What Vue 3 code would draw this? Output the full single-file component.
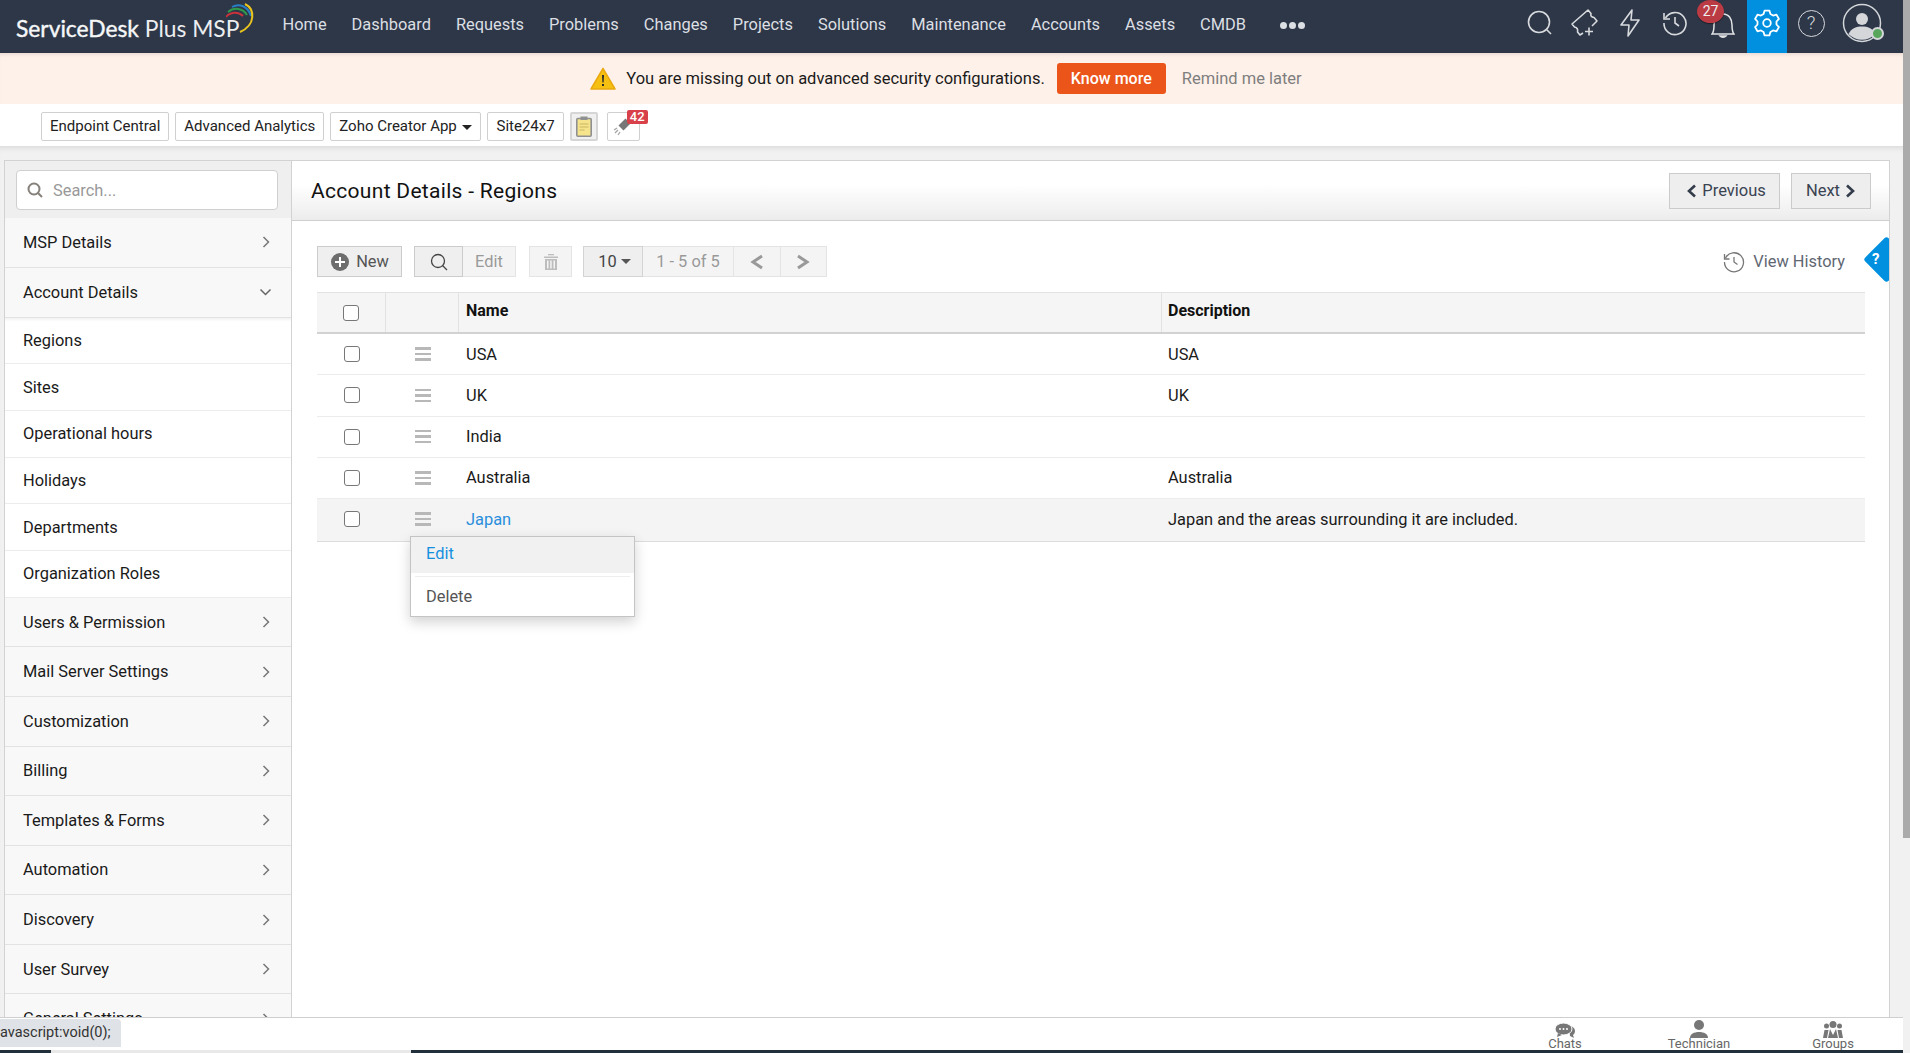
<script setup>
const nav = ['Home','Dashboard','Requests','Problems','Changes','Projects','Solutions','Maintenance','Accounts','Assets','CMDB']
const tools = ['Endpoint Central','Advanced Analytics']
const topItems = ['MSP Details']
const subItems = ['Regions','Sites','Operational hours','Holidays','Departments','Organization Roles']
const lowerItems = ['Users & Permission','Mail Server Settings','Customization','Billing','Templates & Forms','Automation','Discovery','User Survey','General Settings']
const rows = [
  { name:'USA', desc:'USA' },
  { name:'UK', desc:'UK' },
  { name:'India', desc:'' },
  { name:'Australia', desc:'Australia' },
  { name:'Japan', desc:'Japan and the areas surrounding it are included.', active:true },
]
function pt(r, deg) {
  const t = deg * Math.PI / 180
  return (14 + r * Math.cos(t)).toFixed(2) + ' ' + (14 + r * Math.sin(t)).toFixed(2)
}
const pts = []
for (let k = 0; k < 6; k++) {
  const a = k * 60 - 90
  pts.push(pt(9.6, a - 21), pt(12.6, a - 11), pt(12.6, a + 11), pt(9.6, a + 21))
}
const gearPath = 'M' + pts.join('L') + 'Z'
</script>

<template>
  <div class="page">
    <div class="col">
      <header class="header">
        <div class="logo">
          <span class="logo-text"><span class="strong">ServiceDesk</span> Plus MSP</span>
          <svg class="logo-arcs" width="30" height="32" viewBox="0 0 30 32" fill="none">
            <path d="M0 14C4 9 12 8 17 13" stroke="#c8323a" stroke-width="2"/>
            <path d="M2 9C8 4 17 5 21 12" stroke="#2f9a4b" stroke-width="2"/>
            <path d="M6 4C13 0 22 3 25 13" stroke="#2a7fc4" stroke-width="2"/>
            <path d="M19 1C29 6 30 22 14 29" stroke="#e9c31e" stroke-width="2"/>
          </svg>
        </div>
        <nav class="nav">
          <a v-for="n in nav" :key="n">{{ n }}</a>
          <span class="dots"><i></i><i></i><i></i></span>
        </nav>
        <div class="hicons">
          <span class="hi w45"><svg width="26" height="26" viewBox="0 0 26 26" fill="none" stroke="#d8dadd" stroke-width="1.6"><circle cx="12" cy="12" r="10.5"/><path d="M19.5 19.5l4.5 4.5"/></svg></span>
          <span class="hi w45"><svg width="29" height="29" viewBox="0 0 29 29" fill="none" stroke="#d8dadd" stroke-width="1.6" stroke-linejoin="round"><path d="M22 18 27 13 L24 9.500Q20 9 21 5.500L18 2 2 16 4.500 19Q8.500 20 7.500 24L10 27 13 25"/><path d="M19 19.500v8M15 23.500h8"/></svg></span>
          <span class="hi w45"><svg width="22" height="28" viewBox="0 0 22 28" fill="none" stroke="#d8dadd" stroke-width="1.6" stroke-linejoin="round"><path d="M13 1 2 16h8l-1 11 11-16h-8z"/></svg></span>
          <span class="hi w45"><svg width="26" height="26" viewBox="0 0 26 26" fill="none" stroke="#d8dadd" stroke-width="1.6"><path d="M3.500 8A11 11 0 1 1 2 13"/><path d="M2 3v6h6"/><path d="M13 7v6l4 3"/></svg></span>
          <span class="bell"><svg width="24" height="26" viewBox="0 0 24 26" fill="none" stroke="#e3e4e6" stroke-width="1.500"><path d="M1 21c2-2 2-4 2-9 0-6 3-11 9-11s9 5 9 11c0 5 0 7 2 9z"/><path d="M9 23a3.500 2.500 0 0 0 6 0z" fill="#e3e4e6"/></svg><span class="bell-badge">27</span></span>
          <span class="gear"><svg width="28" height="28" viewBox="0 0 28 28" fill="none" stroke="#fff" stroke-width="1.800" stroke-linejoin="round"><circle cx="14" cy="14" r="3.800"/><path :d="gearPath"/></svg></span>
          <span class="hi help"><span class="help-ring">?</span></span>
          <span class="avatar">
            <svg width="40" height="40" viewBox="0 0 40 40"><circle cx="20" cy="20" r="18.500" fill="none" stroke="#d4d6da" stroke-width="1.500"/><circle cx="20" cy="16" r="6" fill="#d4d6da"/><path d="M6.500 31c3-6 8-7.500 13.500-7.500S30.500 25 33.500 31A18.500 18.500 0 0 1 6.500 31z" fill="#d4d6da"/></svg>
            <i class="online"></i>
          </span>
        </div>
      </header>

      <div class="banner">
        <svg width="26" height="24" viewBox="0 0 26 24"><path d="M13 1.500 25 22H1z" fill="#f6c012" stroke="#eaa90f" stroke-width="1.500" stroke-linejoin="round"/><path d="M12 8h2l-.4 7.500h-1.200zM12 17h2v2h-2z" fill="#2b2b2b"/></svg>
        <span class="banner-text">You are missing out on advanced security configurations.</span>
        <button class="know">Know more</button>
        <span class="remind">Remind me later</span>
      </div>

      <div class="toolbar">
        <span v-for="t in tools" :key="t" class="tbtn">{{ t }}</span>
        <span class="tbtn">Zoho Creator App <i class="caret dark"></i></span>
        <span class="tbtn">Site24x7</span>
        <span class="tbtn icon-b clip">
          <svg width="16" height="21" viewBox="0 0 16 21"><rect x=".8" y="2.500" width="14.400" height="17.700" rx="1" fill="#f6e48c" stroke="#8f9190" stroke-width="1.600"/><rect x="4.500" y=".5" width="7" height="3.500" fill="#8f9190"/><path d="M3.500 8h9M3.500 11h9M3.500 14h5" stroke="#c9b860" stroke-width="1.200"/></svg>
        </span>
        <span class="tbtn icon-b rocket">
          <svg width="20" height="20" viewBox="0 0 20 20"><path d="M8 11 15 4" stroke="#777" stroke-width="7"/><path d="M5 13l-3 3M7 15l-2 3M4 11l-3 2" stroke="#a5a5a5" stroke-width="1.300"/></svg>
          <span class="rocket-badge">42</span>
        </span>
      </div>

      <div class="work">
        <aside class="side">
          <div class="side-search">
            <div class="search-box">
              <svg width="16" height="16" viewBox="0 0 16 16" fill="none" stroke="#85807a" stroke-width="2"><circle cx="7" cy="7" r="5.500"/><path d="M11 11l4 4"/></svg>
              <span>Search...</span>
            </div>
          </div>
          <div v-for="i in topItems" :key="i" class="group">{{ i }}<svg class="chev" width="9" height="14" viewBox="0 0 9 14" fill="none" stroke="#777" stroke-width="1.500"><path d="M1.500 2l5 5-5 5"/></svg></div>
          <div class="group open">Account Details<svg class="chev" width="13" height="9" viewBox="0 0 13 9" fill="none" stroke="#666" stroke-width="1.500"><path d="M1.500 1.500l5 5 5-5"/></svg></div>
          <div v-for="s in subItems" :key="s" class="sub">{{ s }}</div>
          <div v-for="i in lowerItems" :key="i" class="group">{{ i }}<svg class="chev" width="9" height="14" viewBox="0 0 9 14" fill="none" stroke="#777" stroke-width="1.500"><path d="M1.500 2l5 5-5 5"/></svg></div>
        </aside>

        <main class="main">
          <div class="title-bar">
            <h1>Account Details - Regions</h1>
            <div class="pn">
              <button class="pn-btn"><svg width="11" height="14" viewBox="0 0 11 14" fill="none" stroke="#333c4a" stroke-width="2.600"><path d="M9 1.500 3 7l6 5.500"/></svg>Previous</button>
              <button class="pn-btn next">Next<svg width="11" height="14" viewBox="0 0 11 14" fill="none" stroke="#333c4a" stroke-width="2.600"><path d="M2 1.500 8 7l-6 5.500"/></svg></button>
            </div>
          </div>

          <div class="content">
            <div class="actions">
              <button class="act new"><svg width="20" height="20" viewBox="0 0 20 20"><circle cx="10" cy="10" r="9" fill="#6d6d6d"/><path d="M10 5v10M5 10h10" stroke="#fff" stroke-width="2"/></svg>New</button>
              <div class="seg">
                <button class="act s-search"><svg width="18" height="18" viewBox="0 0 18 18" fill="none" stroke="#444" stroke-width="1.300"><circle cx="8" cy="8" r="6.500"/><path d="M12.500 12.500l4.500 4.500"/></svg></button>
                <button class="act dis s-edit">Edit</button>
              </div>
              <button class="act dis trash"><svg width="14" height="16" viewBox="0 0 14 16" fill="#bdbdbd"><rect x="0" y="2.500" width="14" height="1.500"/><rect x="4" y="0" width="6" height="1.300"/><path d="M1 5h12v11H1zM3 6.500v8h1.500v-8zM6.200 6.500v8h1.500v-8zM9.500 6.500v8H11v-8z" fill-rule="evenodd"/></svg></button>
              <div class="seg pager">
                <button class="act size">10 <i class="caret"></i></button>
                <span class="act dis range">1 - 5 of 5</span>
                <button class="act dis arrow"><svg width="14" height="16" viewBox="0 0 14 16" fill="none" stroke="#999" stroke-width="3"><path d="M12 2 3 8l9 6"/></svg></button>
                <button class="act dis arrow"><svg width="14" height="16" viewBox="0 0 14 16" fill="none" stroke="#999" stroke-width="3"><path d="M2 2l9 6-9 6"/></svg></button>
              </div>
              <div class="history">
                <svg width="22" height="22" viewBox="0 0 22 22" fill="none" stroke="#777" stroke-width="1.300"><path d="M2.500 7A9.500 9.500 0 1 1 1.500 11"/><path d="M1.500 3v5h5"/><path d="M11 6v5l3.500 2.500"/></svg>
                <span>View History</span>
              </div>
              <span class="qmark"><span>?</span></span>
            </div>

            <div class="table">
              <div class="row head">
                <div class="c-check"><i class="cb"></i></div>
                <div class="c-drag"></div>
                <div class="c-name">Name</div>
                <div class="c-desc">Description</div>
              </div>
              <div v-for="r in rows" :key="r.name" class="row" :class="{ active: r.active }">
                <div class="c-check"><i class="cb"></i></div>
                <div class="c-drag"><span class="burger"><i></i><i></i><i></i></span>
                  <div v-if="r.active" class="menu">
                    <div class="m-edit">Edit</div>
                    <div class="m-sep"></div>
                    <div class="m-del">Delete</div>
                  </div>
                </div>
                <div class="c-name">{{ r.name }}</div>
                <div class="c-desc">{{ r.desc }}</div>
              </div>
            </div>
          </div>
        </main>
        <div class="status">avascript:void(0);</div>
      </div>

      <footer class="bottom">
        <div class="b-item"><svg width="20" height="15" viewBox="0 0 20 15" fill="#777"><path d="M14 3c3 0 6 2 6 5 0 2-1 3-2 4l1 3-4-2z"/><ellipse cx="8.500" cy="6" rx="8.500" ry="6" stroke="#fff"/><path d="M3 10l-1 4 5-2z"/><circle cx="5" cy="6" r="1" fill="#fff"/><circle cx="8.500" cy="6" r="1" fill="#fff"/><circle cx="12" cy="6" r="1" fill="#fff"/></svg><span>Chats</span></div>
        <div class="b-item"><svg width="20" height="18" viewBox="0 0 20 18" fill="#777"><circle cx="10" cy="5" r="5"/><path d="M1 18c0-4 4-6 9-6s9 2 9 6z"/></svg><span>Technician</span></div>
        <div class="b-item"><svg width="20" height="17" viewBox="0 0 20 17" fill="#777"><circle cx="10" cy="3.500" r="3.500"/><circle cx="3.500" cy="5" r="2.500"/><circle cx="16.500" cy="5" r="2.500"/><path d="M0 17l1.500-8h4L4 17zM20 17l-1.500-8h-4L16 17zM5 17l2-9 3 6 3-6 2 9z"/></svg><span>Groups</span></div>
      </footer>
      <div class="strip"><i></i></div>
    </div>
    <div class="scroll"><i></i></div>
  </div>
</template>

<style>
html, body { margin: 0; height: 100%; overflow: hidden; background: #fff; }
</style>

<style scoped>
.page { display: flex; width: 1910px; height: 1053px; overflow: hidden; font-family: Roboto, "Liberation Sans", sans-serif; color: #111; background: #fff; }
.col { flex: 0 0 1903px; display: flex; flex-direction: column; min-width: 0; height: 1053px; }
.scroll { flex: 0 0 7px; background: #f1f1f1; }
.scroll i { display: block; height: 838px; background: #ababab; }

.header { flex: 0 0 53px; height: 53px; background: #2d3748; display: flex; align-items: center; color: #dde0e4; }
.logo { width: 282.500px; flex: none; padding-left: 16px; box-sizing: border-box; position: relative; height: 53px; display: flex; align-items: center; }
.logo-text { font-family: Lato, sans-serif; font-size: 22.800px; color: #eceef0; white-space: nowrap; margin-top: 2px; }
.logo-text .strong { color: #f6f7f8; -webkit-text-stroke: .4px #f6f7f8; }
.logo-arcs { position: absolute; left: 226px; top: 3px; }
.nav { display: flex; align-items: center; gap: 25px; font-size: 16.400px; flex: none; }
.nav a { color: #dcdfe3; white-space: nowrap; margin-top: -4px; }
.dots { display: flex; gap: 2px; margin-left: 9px; margin-top: -3px; }
.dots i { width: 7px; height: 7px; border-radius: 50%; background: #dcdfe3; }
.hicons { margin-left: auto; display: flex; align-items: center; height: 53px; }
.hi { display: flex; align-items: center; justify-content: center; height: 53px; box-sizing: border-box; padding-bottom: 8px; position: relative; }
.w45 { width: 45px; }
.bell { width: 50px; height: 53px; position: relative; display: flex; align-items: flex-start; justify-content: center; box-sizing: border-box; padding: 13px 0 0 1px; }
.bell-badge { position: absolute; left: 0; top: 0; width: 27px; height: 23px; border-radius: 50%; background: #bb3b45; color: #eee; font-size: 14px; line-height: 22px; text-align: center; box-shadow: 0 1px 1px rgba(0,0,0,.4); }
.gear { width: 40px; height: 53px; box-sizing: border-box; padding-bottom: 7px; background: #0190e0; display: flex; align-items: center; justify-content: center; }
.help { width: 48px; padding-bottom: 7px; }
.help-ring { width: 27px; height: 27px; box-sizing: border-box; border: 1.500px solid #d8dadd; border-radius: 50%; color: #d8dadd; font-size: 19px; font-weight: 300; text-align: center; line-height: 24px; }
.avatar { width: 68px; height: 53px; position: relative; display: flex; align-items: flex-start; box-sizing: border-box; padding: 3px 0 0 7px; }
.online { position: absolute; left: 36px; top: 27px; width: 9px; height: 9px; border: 2px solid #d4d6da; border-radius: 50%; background: #58a55c; }

.banner { flex: 0 0 51px; background: #fef1e9; display: flex; align-items: center; justify-content: center; gap: 12px; padding-right: 11px; box-shadow: inset 0 4px 4px -3px rgba(0,0,0,.12); }
.banner svg { margin-right: -2px; }
.banner-text { font-size: 16.500px; color: #1a1a1a; }
.know { height: 31px; width: 109px; border: 0; border-radius: 3px; background: #ec5519; color: #fff; font: 500 16px Roboto, sans-serif; padding: 0; }
.remind { font-size: 16.500px; color: #7e7e7e; margin-left: 4px; }

.toolbar { flex: 0 0 42px; background: #fff; display: flex; align-items: center; gap: 6px; padding-left: 41px; padding-top: 3px; box-sizing: border-box; position: relative; }
.tbtn { height: 29px; line-height: 27px; box-sizing: border-box; border: 1px solid #d0d0d0; border-radius: 2px; padding: 0 8px; font-size: 15px; color: #222; white-space: nowrap; }
.caret { display: inline-block; width: 0; height: 0; border-left: 5px solid transparent; border-right: 5px solid transparent; border-top: 5px solid #555; vertical-align: 1px; margin-left: 2px; }
.caret.dark { border-top-color: #222; }
.icon-b { position: relative; padding: 0; display: flex; align-items: center; justify-content: center; }
.clip { width: 28px; background: #f0f0f0; border: 2px solid #d6d6d6; margin-right: 3px; }
.rocket { width: 33px; }
.rocket-badge { position: absolute; left: 19px; top: -3px; width: 21px; height: 14px; line-height: 14px; text-align: center; font-size: 13px; font-weight: 500; color: #fff; background: #d9414a; border-radius: 2px; }

.work { flex: 1; min-height: 0; display: flex; background: #f1f1f1; padding: 14px 13px 0 4px; box-shadow: inset 0 6px 6px -5px rgba(0,0,0,.12); position: relative; }
.side { flex: 0 0 288px; box-sizing: border-box; border: 1px solid #d2d2d2; border-width: 1px 1px 0 1px; background: #fff; overflow: hidden; }
.side-search { height: 57px; background: #efefef; padding: 9px 13px 0 11px; box-sizing: border-box; }
.search-box { height: 40px; box-sizing: border-box; background: #fff; border: 1px solid #cfcfcf; border-radius: 4px; display: flex; align-items: center; gap: 10px; padding-left: 10px; color: #999; font-size: 16.400px; }
.group { height: 49.600px; box-sizing: border-box; background: #f8f8f8; border-bottom: 1px solid #e2e2e2; padding-left: 18px; font-size: 16.400px; color: #1a1a1a; display: flex; align-items: center; justify-content: space-between; padding-right: 20px; }
.group.open { height: 50px; box-shadow: 0 2px 2px rgba(0,0,0,.05); padding-right: 19px; position: relative; }
.sub { height: 46.700px; box-sizing: border-box; border-bottom: 1px solid #ececec; padding-left: 18px; font-size: 16.400px; color: #1a1a1a; display: flex; align-items: center; background: #fff; }

.main { flex: 1; min-width: 0; background: #fff; border: 1px solid #d2d2d2; border-width: 1px 1px 0 0; box-sizing: border-box; display: flex; flex-direction: column; }
.title-bar { height: 60px; flex: none; box-sizing: border-box; border-bottom: 1px solid #cfcfcf; background: linear-gradient(#fff 40%, #ececec); display: flex; align-items: center; justify-content: space-between; padding: 0 18px 0 19px; }
h1 { margin: 0; font-size: 21px; font-weight: 400; color: #111; letter-spacing: .3px; }
.pn { display: flex; gap: 11px; }
.pn-btn { height: 36px; box-sizing: border-box; background: #eee; border: 1px solid #cbcbcb; color: #3a4352; font: 400 16.500px Roboto, sans-serif; display: flex; align-items: center; gap: 5px; padding: 0 13px 0 16px; }
.pn-btn.next { padding: 0 14px 0 14px; }
.content { flex: 1; padding: 25px 0 0 25px; position: relative; }
.actions { display: flex; align-items: center; height: 31px; position: relative; padding-right: 44px; }
.act { height: 31px; box-sizing: border-box; border: 1px solid #d8d8d8; background: #efefef; color: #555; font: 400 16.400px Roboto, sans-serif; display: inline-flex; align-items: center; justify-content: center; padding: 0; }
.act.dis { background: #f4f4f4; color: #999; border-color: #e4e4e4; }
.new { width: 85px; gap: 6px; margin-right: 12px; border-color: #ccc; }
.seg { display: flex; margin-right: 13px; }
.s-search { width: 49px; border-color: #ccc; }
.s-edit { width: 53px; border-left: 0; }
.trash { width: 43px; margin-right: 11px; }
.size { width: 60px; border-color: #d4d4d4; gap: 2px; padding-left: 3px; color: #444; }
.range { width: 91px; border-left: 0; }
.arrow { width: 46.500px; border-left: 0; }
.pager { margin-right: 0; }
.history { margin-left: auto; display: flex; align-items: center; gap: 8px; color: #5f6773; font-size: 16.400px; }
.qmark { position: absolute; right: 0; top: -10px; width: 26px; height: 46px; overflow: hidden; }
.qmark::before { content: ""; position: absolute; left: 6.500px; top: 6.500px; width: 33px; height: 33px; background: #0190e0; border-radius: 3px; transform: rotate(45deg); }
.qmark span { position: absolute; left: 9px; top: 14px; color: #fff; font-size: 15px; font-weight: 700; }

.table { margin-top: 15px; margin-right: 24px; }
.row { display: flex; height: 41.250px; box-sizing: border-box; align-items: center; border-bottom: 1px solid #ececec; font-size: 16.400px; color: #1a1a1a; }
.row.head { height: 42px; background: #f5f5f5; border-top: 1px solid #e2e2e2; border-bottom: 2px solid #d2d2d2; font-weight: 700; font-size: 16px; color: #111; align-items: stretch; }
.row.active { background: #f4f4f4; height: 43px; padding-bottom: 2px; border-bottom-color: #dcdcdc; }
.row.active .c-name { color: #2a8fdc; }
.c-check { flex: 0 0 69px; display: flex; align-items: center; justify-content: center; box-sizing: border-box; }
.c-drag { flex: 0 0 73px; box-sizing: border-box; display: flex; align-items: center; justify-content: center; position: relative; height: 100%; }
.c-name { flex: 0 0 703px; box-sizing: border-box; padding-left: 7px; }
.c-desc { flex: 1; padding-left: 6px; }
.head .c-check, .head .c-drag { border-right: 1px solid #e2e2e2; }
.head .c-name { border-right: 1px solid #e2e2e2; padding-top: 8px; }
.head .c-desc { padding-top: 8px; }
.head .c-check .cb { margin-top: 1px; }
.cb { width: 16px; height: 16px; box-sizing: border-box; border: 1px solid #777; border-radius: 3px; background: #fff; display: block; }
.burger { display: flex; flex-direction: column; gap: 3px; width: 16px; }
.burger i { height: 2.500px; background: #b8b8b8; display: block; }
.menu { position: absolute; left: 24px; top: 37px; width: 225px; height: 81px; box-sizing: border-box; background: #fff; border: 1px solid #c4c4c4; box-shadow: 0 5px 12px rgba(0,0,0,.18); z-index: 5; font-size: 16.400px; font-weight: 400; }
.m-edit { height: 36px; background: #f1f1f1; color: #1590e0; padding-left: 15px; line-height: 34px; }
.m-sep { height: 1px; background: #eee; margin: 3px 4px 0; }
.m-del { padding-left: 15px; line-height: 40px; color: #555; }

.status { position: absolute; left: 0; bottom: -30px; height: 28px; width: 121px; background: #dfe2e6; border-radius: 0 4px 0 0; line-height: 28px; font-size: 14.500px; color: #333; white-space: nowrap; overflow: hidden; z-index: 6; }

.bottom { flex: 0 0 33px; box-sizing: border-box; background: #fff; border-top: 1px solid #cfcfcf; display: flex; justify-content: flex-end; position: relative; overflow: hidden; }
.b-item { position: relative; width: 134px; display: flex; flex-direction: column; align-items: center; font-size: 13px; color: #666; line-height: 13px; justify-content: flex-end; }
.b-item:nth-child(3) { margin-right: 3px; }
.b-item svg { margin-bottom: -1px; }
.strip { flex: 0 0 3px; background: #22303c; position: relative; display: flex; }
.strip i { margin-left: 51px; width: 360px; height: 3px; background: #e8e8e8; display: block; }
</style>
